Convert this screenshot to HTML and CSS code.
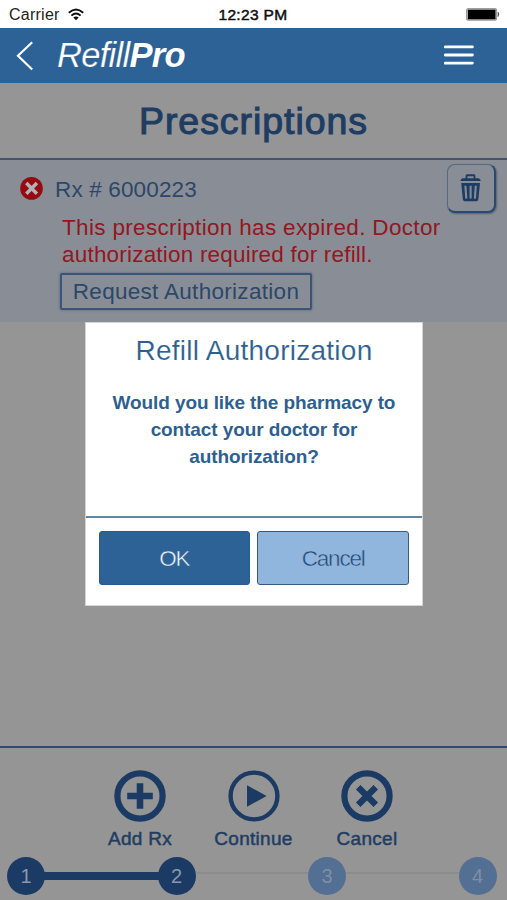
FILE: index.html
```html
<!DOCTYPE html>
<html lang="en">
<head>
<meta charset="utf-8">
<title>RefillPro</title>
<link rel="stylesheet" href="styles.css">
</head>
<body>
<div class="app">
  <div class="status">
    <span class="carrier"><span class="carrier-name">Carrier</span>
      <svg width="16" height="13" viewBox="0 0 16 13"><g fill="none" stroke="#111" stroke-width="1.9"><path d="M.8 4.7Q8-1.8 15.2 4.7"/><path d="M3.4 7.6Q8 3.4 12.6 7.6"/></g><path d="M5.3 9.6Q8 7.2 10.7 9.6L8 12.3Z" fill="#111"/></svg>
    </span>
    <span class="time">12:23 PM</span>
    <svg class="battery" width="34" height="13" viewBox="0 0 34 13"><rect x=".6" y=".6" width="30" height="11.6" rx="1.2" fill="#aaa" stroke="#999"/><rect x="2" y="1.8" width="27.4" height="9.4" fill="#000"/><path d="M32 4.2Q33.6 6.4 32 8.6Z" fill="#222" stroke="#222" stroke-width=".5"/></svg>
  </div>
  <header class="navbar">
    <svg class="back" width="18" height="30" viewBox="0 0 18 30"><path d="M16.2 1.3L2 14.8L16.2 28.5" fill="none" stroke="#fff" stroke-width="2.2"/></svg>
    <div class="brand"><span class="brand-light">Refill</span><b>Pro</b></div>
    <svg class="menu" width="30" height="22" viewBox="0 0 30 22"><g stroke="#fff" stroke-width="2.8" stroke-linecap="round"><path d="M1.2 1.9H28.4M1.2 10H28.4M1.2 18.1H28.4"/></g></svg>
  </header>
  <h1 class="title"><span>Prescriptions</span></h1>
  <section class="rx">
    <div class="rx-head">
      <svg width="23" height="24" viewBox="0 0 23 24"><ellipse cx="11.5" cy="11.4" rx="11.3" ry="11.4" fill="#960a12"/><path d="M6.3 6.1L16.9 16.7M16.9 6.1L6.3 16.7" stroke="#b5b0b5" stroke-width="3.5"/></svg>
      <span class="rx-name">Rx # 6000223</span>
      <button class="trash" aria-label="Delete"><svg width="22" height="28" viewBox="0 0 22 28"><g fill="#1d3c63"><path d="M5.6 4.2V2Q5.6.3 7 .3H14Q15.4.3 15.4 2V4.2H18.5Q20.5 4.6 20.8 7H.4Q.7 4.6 2.6 4.2ZM7.4 4.2H13.6V2.2H7.4Z" fill-rule="evenodd"/><path d="M1.2 9H20L18.4 25Q18.2 27.2 16.4 27.2H4.8Q3 27.2 2.8 25Z"/></g><path d="M5.4 11.8L6.3 24.6M10.6 11.8V24.6M15.8 11.8L14.9 24.6" stroke="#858b94" stroke-width="2.1"/></svg></button>
    </div>
    <p class="warning"><span class="w1">This prescription has expired. Doctor</span><br><span class="w2">authorization required for refill.</span></p>
    <button class="request"><span>Request Authorization</span></button>
  </section>
  <footer class="footer">
    <div class="actions">
      <div class="action"><svg width="52" height="52" viewBox="0 0 52 52"><circle cx="26" cy="26" r="22.6" fill="none" stroke="#1b3b64" stroke-width="6.2"/><path d="M26 13.2V38.8M13.2 26H38.8" stroke="#1b3b64" stroke-width="6.6"/></svg><span>Add Rx</span></div>
      <div class="action"><svg width="52" height="52" viewBox="0 0 52 52"><circle cx="26" cy="26" r="23.4" fill="none" stroke="#1b3b64" stroke-width="4.4"/><path d="M19 15.3L38.6 26L19 36.7Z" fill="#1b3b64"/></svg><span>Continue</span></div>
      <div class="action"><svg width="52" height="52" viewBox="0 0 52 52"><circle cx="26" cy="26" r="22.6" fill="none" stroke="#1b3b64" stroke-width="6.2"/><path d="M17.2 17.2L34.8 34.8M34.8 17.2L17.2 34.8" stroke="#1b3b64" stroke-width="6.4"/></svg><span>Cancel</span></div>
    </div>
    <div class="steps">
      <span class="step">1</span><i class="bar done"></i><span class="step">2</span><i class="bar"></i><span class="step todo">3</span><i class="bar"></i><span class="step todo">4</span>
    </div>
  </footer>
  <div class="modal" role="dialog">
    <h2><span>Refill Authorization</span></h2>
    <p class="ask">Would you like the pharmacy to<br>contact your doctor for<br>authorization?</p>
    <div class="buttons"><button class="ok"><span>OK</span></button><button class="cancel"><span>Cancel</span></button></div>
  </div>
</div>
</body>
</html>
```
FILE: styles.css
```css
* { box-sizing: border-box; }
body { margin: 0; font-family: "Liberation Sans", Arial, sans-serif; }
button { font-family: inherit; padding: 0; }
svg { display: block; flex: none; }
.app { position: relative; width: 507px; height: 900px; overflow: hidden; background: #959595; display: flex; flex-direction: column; white-space: nowrap; }
.status { height: 28px; flex: none; background: #fff; display: grid; grid-template-columns: 1fr auto 1fr; align-items: center; padding: 1px 7px 0 9px; font-size: 16px; color: #222; }
.carrier { display: flex; align-items: center; gap: 8px; }
.carrier-name { letter-spacing: .25px; }
.time { margin-right: 3px; font-size: 15.5px; color: #111; -webkit-text-stroke: .5px #111; letter-spacing: .35px; }
.battery { justify-self: end; }
.navbar { height: 55px; flex: none; background: #2d6297; color: #fff; display: flex; align-items: center; padding: 0 33px 0 16px; }
.brand { margin: -1px 0 0 23px; font-size: 34.5px; font-style: italic; letter-spacing: -.7px; line-height: 40px; }
.brand-light { -webkit-text-stroke: .2px #2d6297; }
.menu { margin-left: auto; }
.title { height: 75px; flex: none; margin: 0; padding-top: 2px; display: flex; align-items: center; justify-content: center; font-size: 37.5px; font-weight: 400; color: #1f3d63; -webkit-text-stroke: 1.1px #1f3d63; letter-spacing: .95px; }
.rx { height: 164px; flex: none; background: #898e96; border-top: 2px solid #43546c; }
.rx-head { height: 54px; display: flex; align-items: center; padding: 3px 11px 0 20px; }
.rx-name { margin: 2px 0 0 12px; font-size: 22.5px; color: #2c4769; letter-spacing: .15px; }
.trash { margin-left: auto; margin-bottom: 1px; width: 49px; height: 49px; border-radius: 8px; border: 1px solid #586980; border-right: 2px solid #2c486e; border-bottom: 2px solid #2c486e; background: #898e96; box-shadow: 1px 1px 2px #53637a; display: flex; align-items: center; justify-content: center; }
.warning { margin: 0 0 0 62px; font-size: 22.5px; line-height: 27px; color: #941620; }
.w1 { letter-spacing: .33px; }
.w2 { letter-spacing: .2px; }
.request { display: block; margin: 5px 0 0 60px; width: 252px; height: 37px; border: 2px solid #3c5475; border-radius: 2px; background: #898e96; box-shadow: 0 0 3px #52647c; color: #2c4769; font-size: 22.5px; letter-spacing: .3px; padding-top: 1px; }
.footer { margin-top: auto; height: 154px; flex: none; border-top: 2px solid #2c4b71; }
.actions { display: flex; justify-content: center; padding: 22px 0 0; height: 109px; }
.action { width: 113.5px; display: flex; flex-direction: column; align-items: center; gap: 5px; font-size: 19px; line-height: 24px; color: #1f3d63; -webkit-text-stroke: .5px #1f3d63; letter-spacing: .3px; }
.steps { display: flex; align-items: center; padding: 0 10.5px 0 7px; }
.step { width: 38px; height: 38px; flex: none; border-radius: 50%; background: #1b3b64; color: #8b98aa; display: flex; align-items: center; justify-content: center; font-size: 20px; }
.step.todo { background: #536f93; color: #7f8ea5; }
.bar { flex: 1; height: 2px; margin-top: -6px; background: #8c8c8c; }
.bar.done { height: 8px; margin: 0; background: #1b3b64; box-shadow: 2px 0 #1b3b64, -2px 0 #1b3b64; }
.modal { position: absolute; left: 85px; top: 322px; width: 338px; height: 284px; background: #fff; border: 1px solid #d5d5d5; color: #2d5f91; text-align: center; display: flex; flex-direction: column; }
.modal h2 { margin: 0; padding-top: 10px; font-size: 28px; line-height: 35px; font-weight: 400; letter-spacing: .25px; -webkit-text-stroke: .15px #fff; }
.ask { margin: 0; padding-top: 21px; height: 150px; border-bottom: 2px solid #5f879f; font-size: 19px; line-height: 27px; font-weight: 700; letter-spacing: -.1px; }
.buttons { display: flex; gap: 7px; padding: 13px 13px 0 12.5px; }
.buttons button { flex: 1; height: 54px; border-radius: 3px; padding-top: 2px; font-size: 22.5px; letter-spacing: -1.2px; }
.ok { background: #2d6297; border: 1px solid #285a97; color: #f0f5fb; -webkit-text-stroke: .45px #2d6297; }
.cancel { background: #91b6de; border: 1px solid #375a80; color: #264a75; -webkit-text-stroke: .45px #91b6de; }
```
